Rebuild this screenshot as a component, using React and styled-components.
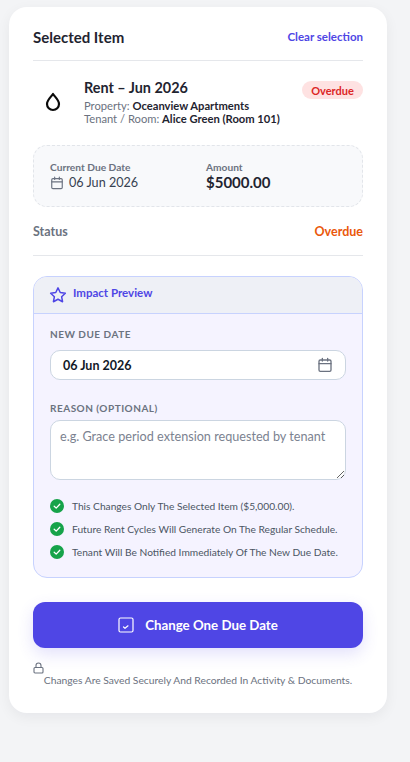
import React from 'react'
import styled, { createGlobalStyle } from 'styled-components'

const GlobalStyle = createGlobalStyle`
    * { box-sizing: border-box; }
    html, body { margin: 0; padding: 0; background: #f3f4f6; }
    body { font-family: "Lato", "Noto Sans", sans-serif; }
`;

const Page = styled.div`
    width: 410px;
    height: 762px;
    padding: 7px 23px 0 9px;
    overflow: hidden;
`;

const Card = styled.main`
    width: 378px;
    height: 706px;
    background: #fff;
    border-radius: 18px;
    padding: 18px 24px 0;
    box-shadow: 0 4px 14px rgba(17, 24, 39, 0.06);
`;

const Header = styled.header`
    display: flex;
    align-items: center;
    justify-content: space-between;
    height: 36px;
    padding-bottom: 12px;
    border-bottom: 1px solid #e5e7eb;
`;

const Title = styled.h2`
    margin: 0;
    font-size: 15px;
    font-weight: 700;
    color: #1f2430;
`;

const ClearLink = styled.a`
    font-size: 11.5px;
    font-weight: 700;
    color: #4f46e5;
`;

const ItemRow = styled.section`
    display: flex;
    align-items: flex-start;
    margin-top: 17px;
`;

const DropWrap = styled.div`
    width: 40px;
    height: 48px;
    flex: none;
    display: flex;
    align-items: center;
    justify-content: center;
    margin-right: 11px;
`;

const ItemText = styled.div`
    flex: 1;
    padding-top: 1px;
`;

const ItemTitle = styled.div`
    font-size: 14.4px;
    font-weight: 700;
    color: #1f2430;
    line-height: 17px;
    margin-bottom: 3px;
`;

const ItemLine = styled.div`
    font-size: 11.2px;
    line-height: 13px;
    color: #6b7280;
    b { color: #1f2430; font-weight: 700; }
`;

const Badge = styled.span`
    flex: none;
    width: 61px;
    height: 18px;
    margin-top: 3px;
    border-radius: 9px;
    background: #fee2e2;
    color: #dc2626;
    font-size: 11px;
    font-weight: 700;
    display: flex;
    align-items: center;
    justify-content: center;
`;

const DueBox = styled.section`
    margin-top: 19px;
    height: 62px;
    border: 1px dashed #e2e5ea;
    border-radius: 14px;
    background: #f8f9fb;
    padding: 15px 16px 0;
    display: grid;
    grid-template-columns: 156px 1fr;
`;

const DueLabel = styled.div`
    font-size: 10.2px;
    font-weight: 700;
    line-height: 12px;
    color: #6b7280;
`;

const DueDate = styled.div`
    display: flex;
    align-items: center;
    gap: 5px;
    margin-top: 1px;
    font-size: 12.6px;
    line-height: 18px;
    color: #374151;
`;

const AmountValue = styled.div`
    font-size: 15px;
    line-height: 18px;
    font-weight: 700;
    color: #1f2430;
`;

const StatusRow = styled.div`
    display: flex;
    align-items: center;
    justify-content: space-between;
    height: 49px;
    border-bottom: 1px solid #e5e7eb;
    font-size: 12.5px;
    font-weight: 700;
    color: #6b7280;
`;

const StatusValue = styled.span`
    color: #ea580c;
`;

const ImpactBox = styled.section`
    margin-top: 20px;
    height: 302px;
    border: 1px solid #c7d2fe;
    border-radius: 14px;
    background: #f5f3ff;
    overflow: hidden;
`;

const ImpactHeader = styled.div`
    height: 37px;
    background: #eef0f6;
    border-bottom: 1px solid #c7d2fe;
    display: flex;
    align-items: center;
    gap: 6px;
    padding: 0 15px;
    font-size: 11.5px;
    font-weight: 700;
    color: #4f46e5;
`;

const ImpactLabel = styled.span`
    padding-bottom: 5px;
`;

const ImpactBody = styled.div`
    padding: 14px 16px 0;
`;

const FieldLabel = styled.label`
    display: block;
    font-size: 10px;
    font-weight: 700;
    letter-spacing: 0.5px;
    line-height: 12px;
    color: #6b7280;
    text-transform: uppercase;
`;

const DateField = styled.div`
    margin: 10px 0 22px;
    height: 30px;
    background: #fff;
    border: 1px solid #cbd5e1;
    border-radius: 10px;
    display: flex;
    align-items: center;
    justify-content: space-between;
    padding: 0 12px;
    font-size: 12.5px;
    font-weight: 700;
    color: #111827;
`;

const ReasonInput = styled.textarea`
    display: block;
    width: 100%;
    height: 60px;
    margin: 6px 0 14px;
    padding: 8px 9px;
    background: #fff;
    border: 1px solid #cbd5e1;
    border-radius: 10px;
    font-family: inherit;
    font-size: 12.65px;
    color: #111827;
    &::placeholder { color: #7b8290; opacity: 1; }
`;

const CheckList = styled.ul`
    list-style: none;
    margin: 0;
    padding: 0;
`;

const CheckItem = styled.li`
    display: flex;
    align-items: center;
    gap: 8px;
    height: 23px;
    font-size: 10.2px;
    color: #4b5563;
`;

const ActionButton = styled.button`
    display: flex;
    align-items: center;
    justify-content: center;
    gap: 11px;
    width: 100%;
    height: 46px;
    margin-top: 24px;
    padding-bottom: 2px;
    border: 0;
    border-radius: 12px;
    background: #4f46e5;
    color: #fff;
    font-family: inherit;
    font-size: 13.3px;
    font-weight: 700;
    box-shadow: 0 6px 16px rgba(79, 70, 229, 0.16);
`;

const Footnote = styled.div`
    margin-top: 14px;
    font-size: 10.3px;
    line-height: 12px;
    color: #6b7280;
    text-align: center;
`;

const LockLine = styled.div`
    height: 12px;
    text-align: left;
    line-height: 0;
`;

const CalendarIcon = ({ size = 14 }) => (
    <svg width={size} height={size} viewBox="0 0 24 24" fill="none" stroke="#6b7280" strokeWidth="2" strokeLinecap="round" strokeLinejoin="round">
        <rect x="3" y="4.5" width="18" height="17" rx="2" />
        <path d="M8 2v4M16 2v4M3 10h18" />
    </svg>
)

const DropIcon = () => (
    <svg width="18" height="20" viewBox="0 0 18 20" fill="none" stroke="#0b0b0b" strokeWidth="2.2">
        <path d="M9 2 C7 5 3 8 3 12 a6 6 0 0 0 12 0 C15 8 11 5 9 2 Z" strokeLinejoin="round" />
    </svg>
)

const StarIcon = () => (
    <svg width="18" height="18" viewBox="0 0 24 24" fill="none" stroke="#4f46e5" strokeWidth="2" strokeLinejoin="round">
        <path d="M12 2.5l3 6.2 6.8.9-5 4.7 1.3 6.7-6.1-3.3-6.1 3.3 1.3-6.7-5-4.7 6.8-.9z" />
    </svg>
)

const CheckCircle = () => (
    <svg width="14" height="14" viewBox="0 0 14 14">
        <circle cx="7" cy="7" r="7" fill="#16a34a" />
        <path d="M4.2 7.2l2 1.9 3.6-3.8" fill="none" stroke="#fff" strokeWidth="1.3" strokeLinecap="round" strokeLinejoin="round" />
    </svg>
)

const ButtonIcon = () => (
    <svg width="16" height="16" viewBox="0 0 16 16" fill="none" stroke="#fff">
        <rect x="1" y="1" width="14" height="14" rx="1.5" strokeWidth="1.2" />
        <path d="M5.5 10l1.5 1.3L10 8.8" strokeWidth="1.2" strokeLinecap="round" strokeLinejoin="round" />
    </svg>
)

const LockIcon = () => (
    <svg width="11" height="12" viewBox="0 0 11 12" fill="none" stroke="#6b7280" strokeWidth="1.1">
        <rect x="1" y="5.5" width="9" height="5.5" rx="1" />
        <path d="M3 5.5V3.5a2.5 2.5 0 0 1 5 0v2" />
    </svg>
)

const checks = [
    'This Changes Only The Selected Item ($5,000.00).',
    'Future Rent Cycles Will Generate On The Regular Schedule.',
    'Tenant Will Be Notified Immediately Of The New Due Date.',
]

function App() {
    return (
        <Page>
            <GlobalStyle />
            <Card>
                <Header>
                    <Title>Selected Item</Title>
                    <ClearLink>Clear selection</ClearLink>
                </Header>
                <ItemRow>
                    <DropWrap><DropIcon /></DropWrap>
                    <ItemText>
                        <ItemTitle>Rent – Jun 2026</ItemTitle>
                        <ItemLine>Property: <b>Oceanview Apartments</b></ItemLine>
                        <ItemLine>Tenant / Room: <b>Alice Green (Room 101)</b></ItemLine>
                    </ItemText>
                    <Badge>Overdue</Badge>
                </ItemRow>
                <DueBox>
                    <div>
                        <DueLabel>Current Due Date</DueLabel>
                        <DueDate><CalendarIcon />06 Jun 2026</DueDate>
                    </div>
                    <div>
                        <DueLabel>Amount</DueLabel>
                        <AmountValue>$5000.00</AmountValue>
                    </div>
                </DueBox>
                <StatusRow>
                    <span>Status</span>
                    <StatusValue>Overdue</StatusValue>
                </StatusRow>
                <ImpactBox>
                    <ImpactHeader><StarIcon /><ImpactLabel>Impact Preview</ImpactLabel></ImpactHeader>
                    <ImpactBody>
                        <FieldLabel>New Due Date</FieldLabel>
                        <DateField>06 Jun 2026<CalendarIcon size={16} /></DateField>
                        <FieldLabel>Reason (Optional)</FieldLabel>
                        <ReasonInput placeholder="e.g. Grace period extension requested by tenant" />
                        <CheckList>
                            {checks.map((text) => (
                                <CheckItem key={text}><CheckCircle />{text}</CheckItem>
                            ))}
                        </CheckList>
                    </ImpactBody>
                </ImpactBox>
                <ActionButton><ButtonIcon />Change One Due Date</ActionButton>
                <Footnote>
                    <LockLine><LockIcon /></LockLine>
                    Changes Are Saved Securely And Recorded In Activity &amp; Documents.
                </Footnote>
            </Card>
        </Page>
    )
}

export default App
